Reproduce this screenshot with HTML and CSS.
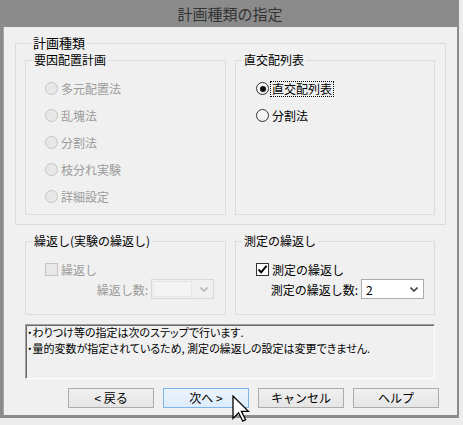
FILE: index.html
```html
<!DOCTYPE html>
<html lang="ja">
<head>
<meta charset="utf-8">
<title>計画種類の指定</title>
<link rel="stylesheet" href="styles.css">
</head>
<body>
<div class="window">
  <div class="titlebar">計画種類の指定</div>
  <div class="client">
    <div class="group outer">
      <div class="legend big">計画種類</div>
      <div class="pair">
        <div class="group wide">
          <div class="legend">要因配置計画</div>
          <div class="options disabled">
            <div class="opt"><span class="radio"></span><span>多元配置法</span></div>
            <div class="opt"><span class="radio"></span><span>乱塊法</span></div>
            <div class="opt"><span class="radio"></span><span>分割法</span></div>
            <div class="opt"><span class="radio"></span><span>枝分れ実験</span></div>
            <div class="opt"><span class="radio"></span><span>詳細設定</span></div>
          </div>
        </div>
        <div class="group narrow">
          <div class="legend">直交配列表</div>
          <div class="options right">
            <div class="opt"><span class="radio checked"></span><span class="focus">直交配列表</span></div>
            <div class="opt"><span class="radio"></span><span>分割法</span></div>
          </div>
        </div>
      </div>
    </div>

    <div class="pair lower">
      <div class="group wide">
        <div class="legend">繰返し(実験の繰返し)</div>
        <div class="checks disabled">
          <div class="crow"><span class="check"></span><span>繰返し</span></div>
          <div class="combo-row"><span>繰返し数:</span>
            <div class="combo off"><span class="field"></span><svg class="chev" width="8" height="5" viewBox="0 0 8 5"><path d="M0.5 0.5 L4 4 L7.5 0.5" fill="none" stroke="#b4b4b4" stroke-width="1.6"/></svg></div>
          </div>
        </div>
      </div>
      <div class="group narrow">
        <div class="legend">測定の繰返し</div>
        <div class="checks right">
          <div class="crow"><span class="check on"><svg width="11" height="11" viewBox="0 0 11 11"><path d="M1.5 5.5 L4.2 8.3 L9.5 1.8" fill="none" stroke="#000" stroke-width="2"/></svg></span><span>測定の繰返し</span></div>
          <div class="combo-row"><span>測定の繰返し数:</span>
            <div class="combo"><span class="field">2</span><svg class="chev" width="8" height="5" viewBox="0 0 8 5"><path d="M0.5 0.5 L4 4 L7.5 0.5" fill="none" stroke="#444" stroke-width="1.6"/></svg></div>
          </div>
        </div>
      </div>
    </div>

    <div class="message">
      <div class="line">・わりつけ等の指定は次のステップで行います.</div>
      <div class="line">・量的変数が指定されているため, 測定の繰返しの設定は変更できません.</div>
    </div>

    <div class="buttons">
      <button class="btn">&lt; 戻る</button>
      <button class="btn hover">次へ &gt;</button>
      <button class="btn">キャンセル</button>
      <button class="btn">ヘルプ</button>
    </div>
  </div>
</div>
<svg class="cursor" width="20" height="32" viewBox="0 0 20 32"><path d="M1 1 L1 23.4 L6.6 17.8 L10.8 26.2 L13.6 24.8 L9.4 16.4 L16.4 16.4 Z" fill="#fff" stroke="#000" stroke-width="1.3" stroke-linejoin="miter"/></svg>
</body>
</html>
```

FILE: styles.css
```css
* { box-sizing: border-box; }
html, body { margin: 0; padding: 0; }
body {
  width: 463px;
  height: 425px;
  overflow: hidden;
  position: relative;
  background: #ececec;
  font-family: "Noto Sans CJK JP", "Noto Sans", sans-serif;
  font-size: 12px;
  color: #000;
}
.window {
  width: 459px;
  height: 418px;
  background: #8b8b8b;
  padding: 0 2px 3px 3px;
  display: flex;
  flex-direction: column;
}
.titlebar {
  height: 27px;
  display: flex;
  align-items: center;
  justify-content: center;
  font-size: 15px;
  color: #333;
  padding-bottom: 1px;
}
.client {
  flex: 1;
  background: #f0f0f0;
  border-left: 1px solid #a8a8a8;
}
.group {
  border: 1px solid #dcdcdc;
}
.legend {
  width: fit-content;
  margin: -8px 0 0 6px;
  padding: 0 2px;
  line-height: 14px;
  height: 14px;
  background: #f0f0f0;
  white-space: nowrap;
}
.legend.big { font-size: 13px; margin-left: 6px; }
.outer {
  margin: 16px 0 0 11px;
  width: 431px;
  padding: 0 10px 9px 9px;
}
.pair {
  display: flex;
  gap: 9px;
  margin-top: 10px;
}
.pair.lower {
  margin: 16px 0 0 21px;
}
.wide { width: 201px; }
.narrow { width: 200px; }
.options {
  padding: 8px 0 4px 19px;
}
.options.right { padding-left: 20px; }
.opt {
  height: 27px;
  display: flex;
  align-items: center;
  gap: 3px;
  line-height: 14px;
}
.radio {
  width: 13px;
  height: 13px;
  border-radius: 50%;
  border: 1px solid #333;
  background: linear-gradient(#fdfdfd, #eaeaea);
  display: inline-flex;
  align-items: center;
  justify-content: center;
  flex: none;
}
.radio.checked::after {
  content: "";
  width: 6px;
  height: 6px;
  border-radius: 50%;
  background: #111;
}
.disabled { color: #9b9b9b; }
.disabled .radio {
  border-color: #c4c4c4;
  background: #e8e8e8;
}
.focus {
  outline: 1px dotted #000;
  outline-offset: 0;
  padding: 0 1px;
  margin-left: -1px;
}
.checks {
  padding: 11px 11px 15px 19px;
}
.checks.right { padding: 11px 10px 15px 20px; }
.crow {
  height: 20px;
  display: flex;
  align-items: center;
  gap: 3px;
}
.check {
  width: 13px;
  height: 13px;
  border: 1px solid #333;
  background: #fff;
  display: inline-flex;
  align-items: center;
  justify-content: center;
  flex: none;
}
.disabled .check {
  border-color: #c4c4c4;
  background: #e8e8e8;
}
.combo-row {
  height: 20px;
  display: flex;
  align-items: center;
  justify-content: flex-end;
  gap: 3px;
}
.combo {
  width: 63px;
  height: 20px;
  border: 1px solid #acacac;
  background: #fff;
  display: flex;
  align-items: center;
  padding: 0 5px 0 4px;
  color: #000;
}
.combo .field { flex: 1; }
.combo.off {
  border-color: #d9d9d9;
  background: #f0f0f0;
  padding: 1px 5px 1px 1px;
}
.combo.off .field {
  height: 100%;
  margin-right: 8px;
  background: #f4f4f4;
  border: 1px solid #e6e6e6;
}
.message {
  margin: 9px 0 0 21px;
  width: 410px;
  height: 55px;
  border-top: 1px solid #a0a0a0;
  border-left: 1px solid #a0a0a0;
  border-right: 1px solid #ffffff;
  border-bottom: 1px solid #ffffff;
  box-shadow: inset 1px 1px 0 #696969;
  padding: 0 0 0 1px;
  font-size: 11px;
  font-feature-settings: "palt";
}
.line {
  height: 16px;
  line-height: 16px;
  white-space: nowrap;
}
.line:first-child { margin-top: -1px; }
.buttons {
  display: flex;
  gap: 9px;
  margin: 9px 0 0 64px;
}
.btn {
  width: 86px;
  height: 20px;
  padding: 0;
  font: inherit;
  color: #000;
  border: 1px solid #acacac;
  background: linear-gradient(#f0f0f0, #e5e5e5);
  line-height: 16px;
}
.btn.hover {
  border-color: #7eb4ea;
  background: linear-gradient(#ecf4fc, #dcecfc);
}
.cursor {
  position: absolute;
  left: 232px;
  top: 395px;
}
```
